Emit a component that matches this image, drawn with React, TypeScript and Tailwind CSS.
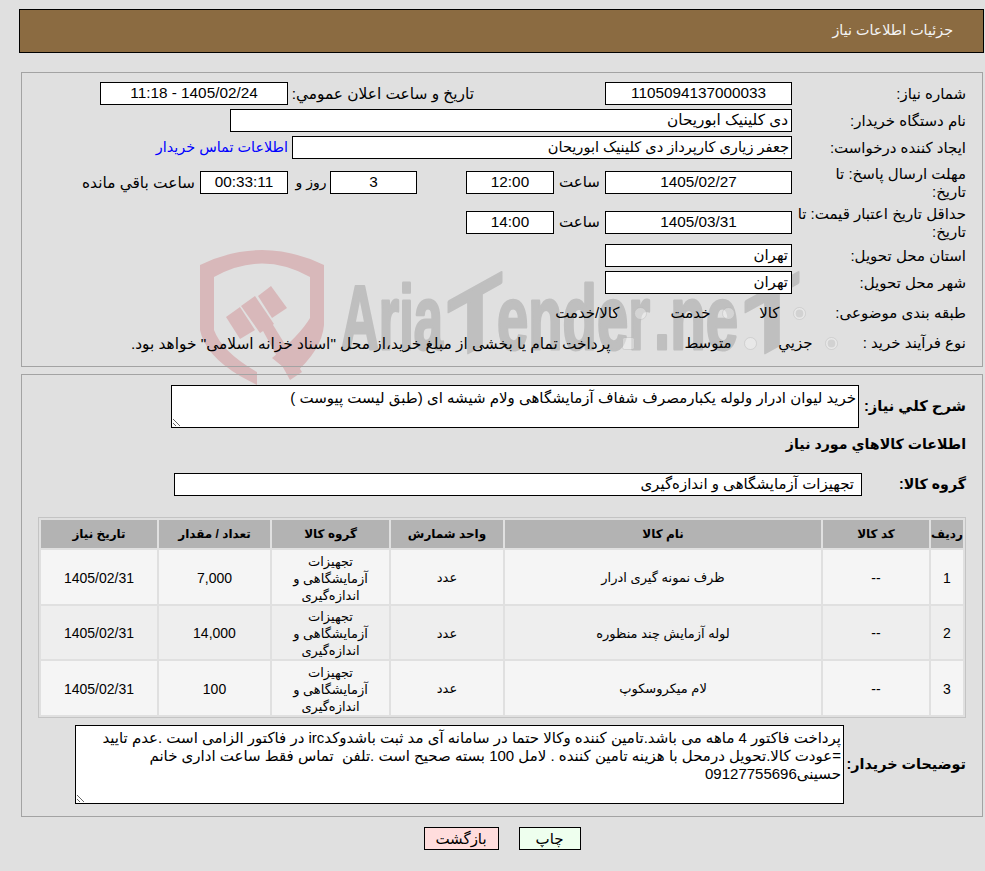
import type { ReactNode } from "react";

const bodyFont = "font-['Liberation_Sans','DejaVu_Sans',sans-serif]";

function Field({ children, className = "" }: { children: ReactNode; className?: string }) {
  return (
    <div className={`flex h-[23px] shrink-0 items-center border border-black bg-white whitespace-nowrap ${className}`}>
      {children}
    </div>
  );
}

function Label({ children }: { children: ReactNode }) {
  return <div className="w-[174px] shrink-0 whitespace-nowrap text-[15px] leading-[18px]">{children}</div>;
}

function Watermark() {
  return (
    <svg className="absolute left-[190px] top-[240px] [direction:ltr]" width="630" height="190" viewBox="190 240 630 190">
      <path
        fill="#d8b8ba"
        d="M200 265 Q262 235 324 265 L324 325 Q322 350 293 375 L272 358 Q300 335 310 318 L310 277 Q262 250 214 277 L214 330 Q222 352 257 372 L257 385 L240 376 Q205 355 200 330 Z"
      />
      <g fill="#d8b8ba">
        <polygon points="226,317 240,307 255,330 240,339" />
        <polygon points="241,306 255,296 274,324 260,333" />
        <polygon points="258,296 271,286 287,308 272,318" />
        <polygon points="257,320 270,320 302,372 290,380" />
      </g>
      <g
        fontFamily="Liberation Sans, sans-serif"
        fontWeight="700"
        fontSize="90"
        fill="#bfbfbf"
        stroke="#bfbfbf"
        strokeWidth="3"
        strokeLinejoin="round"
      >
        <text x="341" y="349" textLength="102" lengthAdjust="spacingAndGlyphs">Aria</text>
        <text transform="translate(448 364) skewY(-29)" textLength="54" lengthAdjust="spacingAndGlyphs">T</text>
        <text x="497" y="349" textLength="153" lengthAdjust="spacingAndGlyphs">ender</text>
        <text x="654" y="349" textLength="84" lengthAdjust="spacingAndGlyphs">.ne</text>
        <text transform="translate(745 364) skewY(-29)" textLength="54" lengthAdjust="spacingAndGlyphs">T</text>
      </g>
    </svg>
  );
}

const rows = [
  { id: "1", name: "ظرف نمونه گیری ادرار", qty: "7,000", bg: "bg-[#f5f5f5]", h: "h-[54px]" },
  { id: "2", name: "لوله آزمایش چند منظوره", qty: "14,000", bg: "bg-[#eeeeee]", h: "h-[53px]" },
  { id: "3", name: "لام میکروسکوپ", qty: "100", bg: "bg-[#f5f5f5]", h: "h-[54px]" },
];

const headers = [
  { title: "ردیف", w: "w-[32px]" },
  { title: "کد کالا", w: "w-[106px]" },
  { title: "نام کالا", w: "w-[316px]" },
  { title: "واحد شمارش", w: "w-[112px]" },
  { title: "گروه کالا", w: "w-[117px]" },
  { title: "تعداد / مقدار", w: "w-[111px]" },
  { title: "تاریخ نیاز", w: "w-[116px]" },
];

export default function App() {
  return (
    <div dir="rtl" className={`relative min-h-[871px] w-[985px] overflow-hidden bg-[#e0e0e0] text-[15px] text-black ${bodyFont}`}>
      <Watermark />

      <div className="relative ml-[19px] mr-px pt-[9px]">
        <div className="flex h-[44px] items-center border border-black bg-[#8b6b41] pr-[30px] text-[14.3px] text-[#f4f4f4]">
          جزئیات اطلاعات نیاز
        </div>
      </div>

      <div className="relative ml-[21px] mr-[2px] mt-[19px] flex h-[295px] flex-col border border-[#a3a3a3] pr-[16px] pt-[9px]">
        <div className="flex items-center">
          <Label>شماره نیاز:</Label>
          <Field className="w-[187px] justify-center text-[15.3px]">1105094137000033</Field>
          <div className="w-[131px] shrink-0" />
          <div className="w-[186px] shrink-0 whitespace-nowrap text-[15.4px]">تاریخ و ساعت اعلان عمومي:</div>
          <Field className="w-[188px] justify-center text-[15.3px]">1405/02/24 - 11:18</Field>
        </div>
        <div className="mt-[4px] flex items-center">
          <Label>نام دستگاه خریدار:</Label>
          <Field className="w-[562px] pr-[3px] text-[15.3px]">دی کلینیک ابوریحان</Field>
        </div>
        <div className="mt-[4px] flex items-center">
          <Label>ایجاد کننده درخواست:</Label>
          <Field className="w-[500px] pr-[2px] text-[14.6px]">جعفر زیاری کارپرداز دی کلینیک ابوریحان</Field>
          <a className="mr-[4px] whitespace-nowrap text-[14.4px] text-[#0000ff]">اطلاعات تماس خریدار</a>
        </div>
        <div className="mt-[6px] flex h-[35px] items-center">
          <Label>
            مهلت ارسال پاسخ: تا
            <br />
            تاریخ:
          </Label>
          <Field className="h-[22px] w-[187px] justify-center text-[15.3px]">1405/02/27</Field>
          <div className="w-[51px] shrink-0 text-center">ساعت</div>
          <Field className="h-[22px] w-[88px] justify-center text-[15.3px]">12:00</Field>
          <div className="w-[49px] shrink-0" />
          <Field className="h-[22px] w-[87px] justify-center text-[15.3px]">3</Field>
          <div className="w-[42px] shrink-0 pl-[4px] text-center text-[14px] whitespace-nowrap">روز و</div>
          <Field className="h-[22px] w-[88px] justify-center bg-[#ffffee] text-[15.3px]">00:33:11</Field>
          <div className="mr-[5px] whitespace-nowrap text-[15.4px]">ساعت باقي مانده</div>
        </div>
        <div className="mt-[5px] flex h-[35px] items-center">
          <Label>
            حداقل تاریخ اعتبار قیمت: تا
            <br />
            تاریخ:
          </Label>
          <Field className="w-[187px] justify-center text-[15.3px]">1405/03/31</Field>
          <div className="w-[51px] shrink-0 text-center">ساعت</div>
          <Field className="w-[88px] justify-center text-[15.3px]">14:00</Field>
        </div>
        <div className="mt-[4px] flex items-center">
          <Label>استان محل تحویل:</Label>
          <Field className="w-[187px] pr-[3px]">تهران</Field>
        </div>
        <div className="mt-[4px] flex items-center">
          <Label>شهر محل تحویل:</Label>
          <Field className="w-[187px] pr-[3px]">تهران</Field>
        </div>
        <div className="mt-[8px] flex h-[22px] items-center">
          <Label>طبقه بندی موضوعی:</Label>
          <input type="radio" disabled defaultChecked name="cat" className="m-0 mr-[-13.5px] h-[13px] w-[13px] shrink-0 opacity-60" />
          <span className="mr-[13px] w-[45px] shrink-0 whitespace-nowrap">کالا</span>
          <input type="radio" disabled name="cat" className="m-0 h-[13px] w-[13px] shrink-0 opacity-60" />
          <span className="mr-[11px] w-[64px] shrink-0 whitespace-nowrap">خدمت</span>
          <input type="radio" disabled name="cat" className="m-0 h-[13px] w-[13px] shrink-0 opacity-60" />
          <span className="mr-[14px] whitespace-nowrap">کالا/خدمت</span>
        </div>
        <div className="mt-[8px] flex h-[22px] items-center">
          <Label>نوع فرآیند خرید :</Label>
          <input type="radio" disabled defaultChecked name="kind" className="m-0 mr-[-45.5px] h-[13px] w-[13px] shrink-0 opacity-60" />
          <span className="mr-[12px] w-[56px] shrink-0 whitespace-nowrap">جزیي</span>
          <input type="radio" disabled name="kind" className="m-0 h-[13px] w-[13px] shrink-0 opacity-60" />
          <span className="mr-[12px] w-[97px] shrink-0 whitespace-nowrap">متوسط</span>
          <input type="checkbox" disabled className="m-0 h-[13px] w-[13px] shrink-0 opacity-60" />
          <span className="mr-[11px] whitespace-nowrap text-[15.4px]">پرداخت تمام یا بخشی از مبلغ خرید،از محل "اسناد خزانه اسلامی" خواهد بود.</span>
        </div>
      </div>

      <div className="relative ml-[21px] mr-[2px] mt-[7px] flex h-[443px] flex-col border border-[#a3a3a3] pr-[16px] pt-[10px]">
        <div className="flex items-center">
          <div className="w-[107px] shrink-0 whitespace-nowrap text-[14.7px] font-bold">شرح کلي نیاز:</div>
          <textarea
            readOnly
            dir="rtl"
            className="h-[43px] w-[688px] resize border border-black bg-white px-[2px] pt-[3px] text-[15px] leading-[17px] outline-none"
            defaultValue="خرید لیوان ادرار ولوله یکبارمصرف شفاف آزمایشگاهی ولام شیشه ای (طبق لیست پیوست )"
          />
        </div>
        <div className="mt-[5px] flex h-[24px] items-center text-[14.2px] font-bold">اطلاعات کالاهاي مورد نیاز</div>
        <div className="mt-[16px] flex items-center">
          <div className="w-[104px] shrink-0 whitespace-nowrap text-[14.2px] font-bold">گروه کالا:</div>
          <Field className="w-[688px] pr-[7px]">تجهیزات آزمایشگاهی و اندازه‌گیری</Field>
        </div>

        <table className="mt-[21px] w-[928px] table-fixed border-separate border-spacing-[2px] border border-[#c4c4c4] text-center text-[13px]">
          <thead>
            <tr>
              {headers.map((h) => (
                <th key={h.title} className={`${h.w} h-[28px] bg-[#b3b3b3] p-0 text-[12px] font-bold`}>
                  {h.title}
                </th>
              ))}
            </tr>
          </thead>
          <tbody>
            {rows.map((r) => (
              <tr key={r.id} className={r.bg}>
                <td className={`${r.h} p-0 pt-[2px] text-[14px]`}>{r.id}</td>
                <td className="p-0 pt-[2px] text-[14px]">--</td>
                <td className="p-0 pt-[2px]">{r.name}</td>
                <td className="p-0 pt-[2px]">عدد</td>
                <td className="px-[8px] pb-0 pt-[2px] leading-[17px]">تجهیزات آزمایشگاهی و اندازه‌گیری</td>
                <td className="p-0 pt-[2px] text-[14px]">{r.qty}</td>
                <td className="p-0 pt-[2px] text-[14px]">1405/02/31</td>
              </tr>
            ))}
          </tbody>
        </table>

        <div className="mt-[7px] flex items-center">
          <div className="w-[122px] shrink-0 whitespace-nowrap text-[14.4px] font-bold">توضیحات خریدار:</div>
          <textarea
            readOnly
            dir="rtl"
            className="h-[79px] w-[769px] resize border border-black bg-white px-[2px] py-[3px] text-[15px] leading-[18px] outline-none"
            defaultValue="پرداخت فاکتور 4 ماهه می باشد.تامین کننده وکالا حتما در سامانه آی مد ثبت باشدوکدirc در فاکتور الزامی است .عدم تایید =عودت کالا.تحویل درمحل با هزینه تامین کننده . لامل 100 بسته صحیح است .تلفن  تماس فقط ساعت اداری خانم حسینی09127755696"
          />
        </div>
      </div>

      <div className="relative ml-[21px] mr-[2px] mt-[10px] flex justify-center gap-[20px]">
        <button className="h-[23px] w-[62px] border border-black bg-[#eeffee] text-[15px]">چاپ</button>
        <button className="h-[23px] w-[75px] border border-black bg-[#ffdddd] text-[15px]">بازگشت</button>
      </div>
    </div>
  );
}
